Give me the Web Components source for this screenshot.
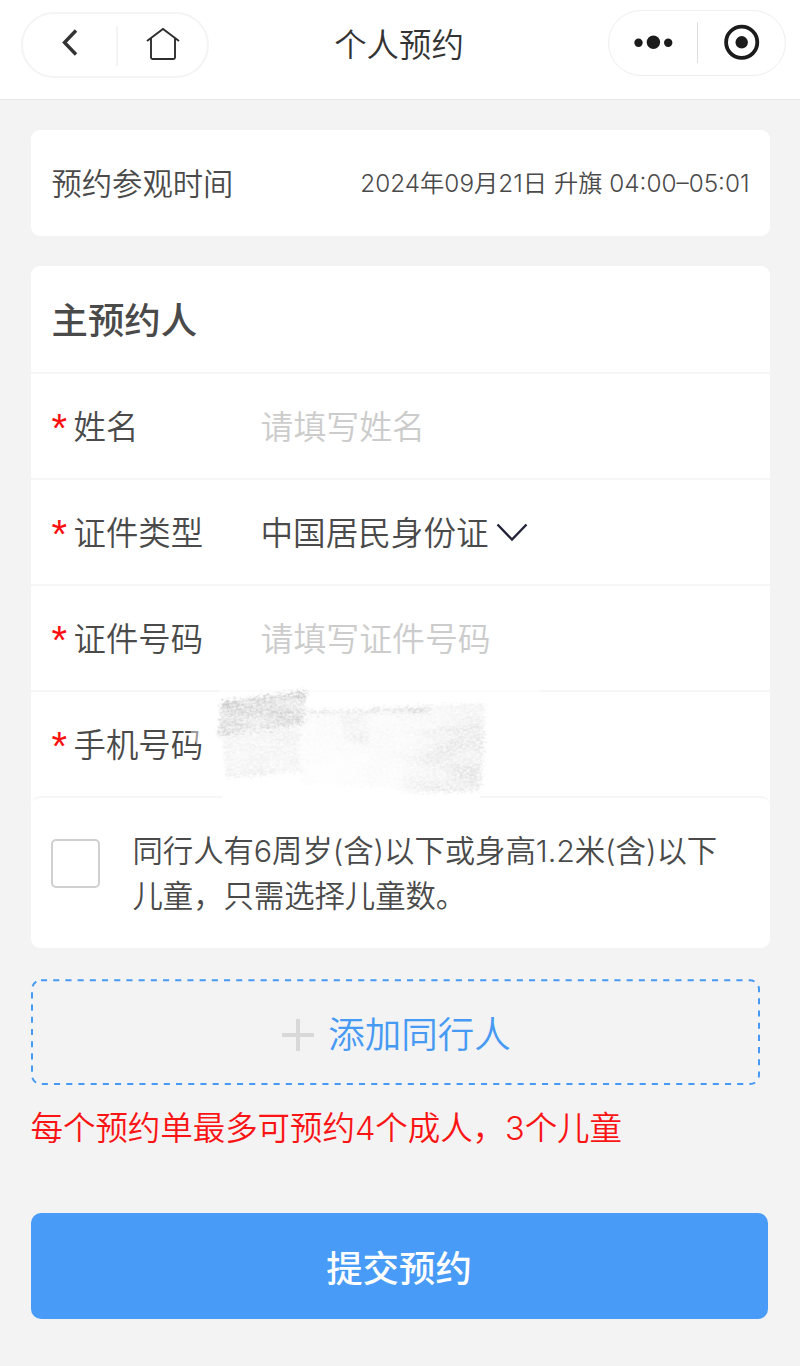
<!DOCTYPE html>
<html lang="zh-CN">
<head>
<meta charset="utf-8" />
<title>个人预约</title>
<style>
body {
  margin: 0;
  min-height: 1366px;
  background: #f3f3f3;
  color: #4a4a4a;
  font-family: Inter, "Noto Sans CJK SC", sans-serif;
  font-weight: 350;
}
</style>
</head>
<body>
<booking-page></booking-page>

<script>
const define = (name, html) => {
  const template = document.createElement("template");
  template.innerHTML = html;
  window.customElements.define(
    name,
    class extends HTMLElement {
      constructor() {
        super();
        this.attachShadow({ mode: "open" });
        this.shadowRoot.appendChild(template.content.cloneNode(true));
      }
    }
  );
};

//Top bar
define("nav-bar", `
<style>
:host {
  display: flex;
  justify-content: space-between;
  align-items: flex-start;
  box-sizing: border-box;
  height: 100px;
  padding: 10px 14px 0 21px;
  background: #fff;
  border-bottom: 1px solid #e4e8e7;
}
.pill {
  display: flex;
  align-items: center;
  box-sizing: border-box;
  background: #fff;
}
.left {
  width: 188px;
  height: 66px;
  margin-top: 2px;
  border: 2px solid #f4f4f4;
  border-radius: 33px;
}
.right {
  width: 178px;
  height: 66px;
  border: 1px solid #eeeeee;
  border-radius: 33px;
}
.title {
  padding: 12px 19px 0 0;
  color: #333;
  font-size: 32.4px;
  line-height: 48px;
  white-space: nowrap;
}
svg {
  display: block;
}
</style>
<div class="pill left">
  <svg width="184" height="62" viewBox="23 14 184 62" fill="none">
    <path d="M76 30.5 64.5 42.5 76 54.5" stroke="#333" stroke-width="3.4" />
    <path d="M117 26V66" stroke="#f1f1f1" stroke-width="1.6" />
    <path d="M147 41 163 29 179 41M151 38V57.5Q151 59 152.5 59H173.5Q175 59 175 57.5V38" stroke="#2e2e2e" stroke-width="1.9" />
  </svg>
</div>
<div class="title"><slot></slot></div>
<div class="pill right">
  <svg width="176" height="64" viewBox="609 11 176 64" fill="none">
    <g fill="#1b1b1b">
      <circle cx="638.5" cy="42.7" r="4.2" />
      <circle cx="653.4" cy="42.3" r="6.7" />
      <circle cx="668.2" cy="42.7" r="4.2" />
      <circle cx="741.7" cy="42.3" r="6.2" />
    </g>
    <path d="M697.5 22.5V63" stroke="#dedede" stroke-width="1" />
    <circle cx="741.7" cy="42.3" r="15.6" stroke="#1b1b1b" stroke-width="3.8" />
  </svg>
</div>
`);

define("info-card", `
<style>
:host {
  display: block;
  background: #fff;
  border-radius: 9px;
}
</style>
<slot></slot>
`);

define("visit-time", `
<style>
:host {
  display: flex;
  justify-content: space-between;
  align-items: center;
  box-sizing: border-box;
  height: 106px;
  padding: 0 20px 3px 21px;
  font-size: 30.3px;
  white-space: nowrap;
}
.time {
  font-size: 24.3px;
}
</style>
<slot name="label"></slot>
<span class="time"><slot></slot></span>
`);

define("card-title", `
<style>
:host {
  display: flex;
  align-items: center;
  box-sizing: border-box;
  height: 106px;
  padding: 0 21px 2px;
  font-size: 36.4px;
  font-weight: 500;
}
</style>
<slot></slot>
`);

//One line of the form, label on the left and value on the right
define("form-row", `
<style>
:host {
  display: grid;
  grid-template-columns: 22px 187px 1fr;
  align-items: center;
  box-sizing: border-box;
  position: relative;
  height: 106px;
  padding: 4px 21px 0;
  border-top: 2px solid #f6f6f6;
  font-size: 32.4px;
  line-height: 48px;
  white-space: nowrap;
}
.star {
  color: #fb0f0f;
  font-family: "Liberation Sans", sans-serif;
  font-size: 40px;
  line-height: 48px;
}
.value {
  display: flex;
  align-items: center;
  gap: 7px;
  margin-top: -2px;
  font-size: 32.6px;
}
:host([empty]) .value {
  color: #ccc;
  font-size: 32.9px;
}
</style>
<span class="star">*</span>
<slot name="label"></slot>
<span class="value"><slot></slot></span>
`);

define("chevron-down", `
<style>
:host {
  display: block;
}
svg {
  display: block;
}
</style>
<svg width="32" height="22" viewBox="0 0 32 22" fill="none">
  <path d="M1.5 2.5 16 17.5 30.5 2.5" stroke="#23233a" stroke-width="2.4" />
</svg>
`);

//Chalk strokes that hide the phone number
define("chalk-mask", `
<style>
:host {
  position: absolute;
  left: 159px;
  top: -6px;
}
svg {
  display: block;
}
</style>
<svg width="350" height="114" viewBox="190 687 350 114">
  <defs>
    <filter id="chalk" x="-5%" y="-10%" width="110%" height="120%">
      <feTurbulence type="fractalNoise" baseFrequency="0.3 0.4" numOctaves="3" seed="8" result="n" />
      <feTurbulence type="fractalNoise" baseFrequency="0.03 0.06" numOctaves="2" seed="3" result="m" />
      <feGaussianBlur in="SourceGraphic" stdDeviation="1.8" result="s" />
      <feDisplacementMap in="s" in2="n" scale="10" result="d" />
      <feColorMatrix in="n" values="0 0 0 0 0  0 0 0 0 0  0 0 0 0 0  1.5 0 0 0 -.1" result="a" />
      <feColorMatrix in="m" values="0 0 0 0 0  0 0 0 0 0  0 0 0 0 0  1.2 0 0 0 .2" result="b" />
      <feComposite in="d" in2="a" operator="in" result="e" />
      <feComposite in="e" in2="b" operator="in" />
      <feGaussianBlur stdDeviation=".7" />
    </filter>
    <linearGradient id="wide">
      <stop offset="0" stop-color="#f9f9f9" />
      <stop offset=".6" stop-color="#f7f7f7" />
      <stop offset="1" stop-color="#ebebeb" />
    </linearGradient>
    <linearGradient id="corner">
      <stop offset="0" stop-color="#e6e6e6" stop-opacity="0" />
      <stop offset=".6" stop-color="#e2e2e2" />
    </linearGradient>
    <filter id="soft"><feGaussianBlur stdDeviation="7" /></filter>
  </defs>
  <path d="M219 689 H540 V693 H300 V797 H219Z" fill="#fff" opacity=".6" />
  <path d="M222 795H480V801H222Z" fill="#fff" />
  <path d="M190 731 204 728 202 741 197 746Z" fill="#fff" opacity=".45" />
  <g filter="url(#chalk)" color-interpolation-filters="sRGB">
    <path d="M222 728 300 714 299 774 226 779Z" fill="#efefef" />
    <path d="M300 712 485 704 482 790 420 793 375 788 300 784Z" fill="url(#wide)" />
    <path d="M221 703 306 692 304 725 218 738Z" fill="#cfcfcf" />
    <path d="M222 702 307 692 306 698 222 707Z" fill="#c2c2c2" />
    <path d="M306 711 370 712 371 708 430 708 430 714 306 715Z" fill="#dadada" />
    <path d="M340 716 372 718 366 746 344 740Z" fill="#ececec" />
    <path d="M400 732 484 726 478 792 396 795Z" fill="url(#corner)" />
    <path d="M226 774 305 769 305 772 226 777Z" fill="#e3e3e3" />
  </g>
  <ellipse cx="335" cy="773" rx="32" ry="18" fill="#fff" opacity=".6" filter="url(#soft)" />
</svg>
`);

define("child-option", `
<style>
:host {
  display: flex;
  align-items: flex-start;
  box-sizing: border-box;
  height: 152px;
  padding: 31px 20px 0;
  border-top: 2px solid #f6f6f6;
  border-radius: 9px;
}
.box {
  box-sizing: border-box;
  flex: none;
  width: 49px;
  height: 49px;
  margin-top: 9.5px;
  border: 2px solid #d0d0d0;
  border-radius: 5px;
}
.text {
  margin-left: 33px;
  font-size: 30.4px;
  line-height: 45px;
  letter-spacing: -.06px;
  white-space: nowrap;
}
</style>
<span class="box"></span>
<div class="text"><slot></slot></div>
`);

define("add-person", `
<style>
:host {
  display: grid;
  width: 730px;
  height: 107px;
}
.frame,
.content {
  grid-area: 1 / 1;
}
.content {
  display: flex;
  align-items: center;
  justify-content: center;
  gap: 13px;
  padding-left: 1px;
  color: #469af3;
  font-size: 36.5px;
}
.plus {
  margin-top: 4px;
}
svg {
  display: block;
}
</style>
<svg class="frame" width="730" height="107" fill="none">
  <rect x="1" y="1.3" width="727" height="103.8" rx="9" stroke="#469af3" stroke-width="2" stroke-dasharray="6.1 6.1" />
</svg>
<div class="content">
  <svg class="plus" width="34" height="34"><path d="M17 1V33M1 17H33" stroke="#d8d8d8" stroke-width="4" /></svg>
  <slot></slot>
</div>
`);

define("submit-button", `
<style>
:host {
  display: flex;
  align-items: center;
  justify-content: center;
  width: 737px;
  height: 106px;
  border-radius: 10px;
  background: #489bf6;
  color: #fff;
  font-size: 36.4px;
  font-weight: 500;
}
</style>
<slot></slot>
`);

define("booking-page", `
<style>
:host {
  display: block;
}
main {
  display: flex;
  flex-direction: column;
  padding: 30px 30.5px 0;
}
.form {
  margin-top: 30px;
}
add-person {
  margin-top: 31px;
}
.note {
  margin: 19px 0 60px;
  color: #fa1414;
  font-size: 32.5px;
  line-height: 48px;
  letter-spacing: -.06px;
  white-space: nowrap;
}
</style>
<nav-bar>个人预约</nav-bar>
<main>
  <info-card>
    <visit-time><span slot="label">预约参观时间</span>2024年09月21日 升旗 04:00–05:01</visit-time>
  </info-card>
  <info-card class="form">
    <card-title>主预约人</card-title>
    <form-row empty><span slot="label">姓名</span>请填写姓名</form-row>
    <form-row><span slot="label">证件类型</span>中国居民身份证<chevron-down></chevron-down></form-row>
    <form-row empty><span slot="label">证件号码</span>请填写证件号码</form-row>
    <form-row><span slot="label">手机号码</span><chalk-mask></chalk-mask></form-row>
    <child-option>同行人有6周岁(含)以下或身高1.2米(含)以下<br />儿童，只需选择儿童数。</child-option>
  </info-card>
  <add-person>添加同行人</add-person>
  <div class="note">每个预约单最多可预约4个成人，3个儿童</div>
  <submit-button>提交预约</submit-button>
</main>
`);
</script>
</body>
</html>
